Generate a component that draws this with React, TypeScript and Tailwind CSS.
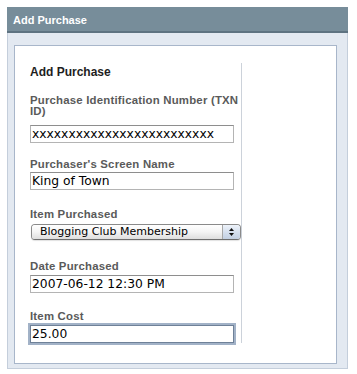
// App.tsx
//
// "Add Purchase" admin panel: title bar, light blue body, white card with
// a single form column (text fields + aqua-style popup select).

const sans = "font-['Liberation_Sans','Arial',sans-serif]";
const field = "font-['DejaVu_Sans','Lucida_Grande',sans-serif]";

function Label({ children, className = "" }: { children: React.ReactNode; className?: string }) {
  return (
    <div
      className={`${sans} text-[11.4px] leading-[11px] font-bold text-[#5a5a5a] ${className}`}
    >
      {children}
    </div>
  );
}

function TextBox({
  value,
  focused = false,
  className = "",
}: {
  value: string;
  focused?: boolean;
  className?: string;
}) {
  return (
    <div
      className={`${field} w-[204px] h-[18px] pl-[1px] text-[12.3px] leading-[16px] text-black bg-white whitespace-nowrap overflow-hidden border ${
        focused
          ? "border-[#6f8198] shadow-[0_0_0_2px_#a2b2c7]"
          : "border-[#b4b4b4] border-t-[#8e8e8e]"
      } ${className}`}
    >
      {value}
    </div>
  );
}

function PopupSelect({ value, className = "" }: { value: string; className?: string }) {
  return (
    <div
      className={`flex ml-[1px] w-[210px] h-[16px] rounded-[4px] border border-[#8a8a8a] border-b-[#6e6e6e] overflow-hidden shadow-[0_1px_1px_rgba(0,0,0,0.12)] ${className}`}
    >
      <div
        className={`${field} flex-1 pl-[8px] text-[11px] leading-[14px] text-black bg-gradient-to-b from-white via-[#f4f4f4] to-[#dedede]`}
      >
        {value}
      </div>
      <div className="w-[18px] border-l border-[#a7a7a7] bg-gradient-to-b from-[#eef3fa] via-[#d6e0ee] to-[#c2cfe2] flex flex-col items-center justify-center gap-[2px]">
        <svg width="5" height="3" viewBox="0 0 5 3">
          <path d="M2.5 0 L5 3 L0 3 Z" fill="#111" />
        </svg>
        <svg width="5" height="3" viewBox="0 0 5 3">
          <path d="M0 0 L5 0 L2.5 3 Z" fill="#111" />
        </svg>
      </div>
    </div>
  );
}

export default function App() {
  return (
    <div className="w-[357px] h-[374px] bg-white pt-[7px] pl-[7px]">
      <div className="w-[341px]">
        {/* title bar */}
        <div
          className={`${sans} h-[26px] pt-[3px] pl-[6px] bg-[#778d9a] border-b-2 border-[#5e7381] text-white text-[11px] font-bold leading-[20px]`}
        >
          Add Purchase
        </div>

        {/* body */}
        <div className="bg-[#e3e9f1] border-x border-b border-[#c4cedb] pt-[12px] pl-[6px] pb-[4px]">
          <div className="w-[323px] h-[319px] bg-white border border-[#a8b6ca] pt-[17px] pl-[15px]">
            <div className="w-[212px] h-[280px] pt-[2px] border-r border-[#ccd2da]">
              <div className={`${sans} text-[12px] leading-[14px] font-bold text-[#1e1e1e]`}>
                Add Purchase
              </div>

              <Label className="mt-[16px] tracking-[0.2px]">
                Purchase Identification Number (TXN ID)
              </Label>
              <TextBox className="mt-[8px]" value="xxxxxxxxxxxxxxxxxxxxxxxxx" />

              <Label className="mt-[16px] tracking-[0.2px]">Purchaser's Screen Name</Label>
              <TextBox className="mt-[2px]" value="King of Town" />

              <Label className="mt-[19px] tracking-[0.2px]">Item Purchased</Label>
              <PopupSelect className="mt-[4px]" value="Blogging Club Membership" />

              <Label className="mt-[21px] tracking-[0.2px]">Date Purchased</Label>
              <TextBox className="mt-[3px]" value="2007-06-12 12:30 PM" />

              <Label className="mt-[18px] tracking-[0.2px]">Item Cost</Label>
              <TextBox className="mt-[3px]" value="25.00" focused />
            </div>
          </div>
        </div>
      </div>
    </div>
  );
}
